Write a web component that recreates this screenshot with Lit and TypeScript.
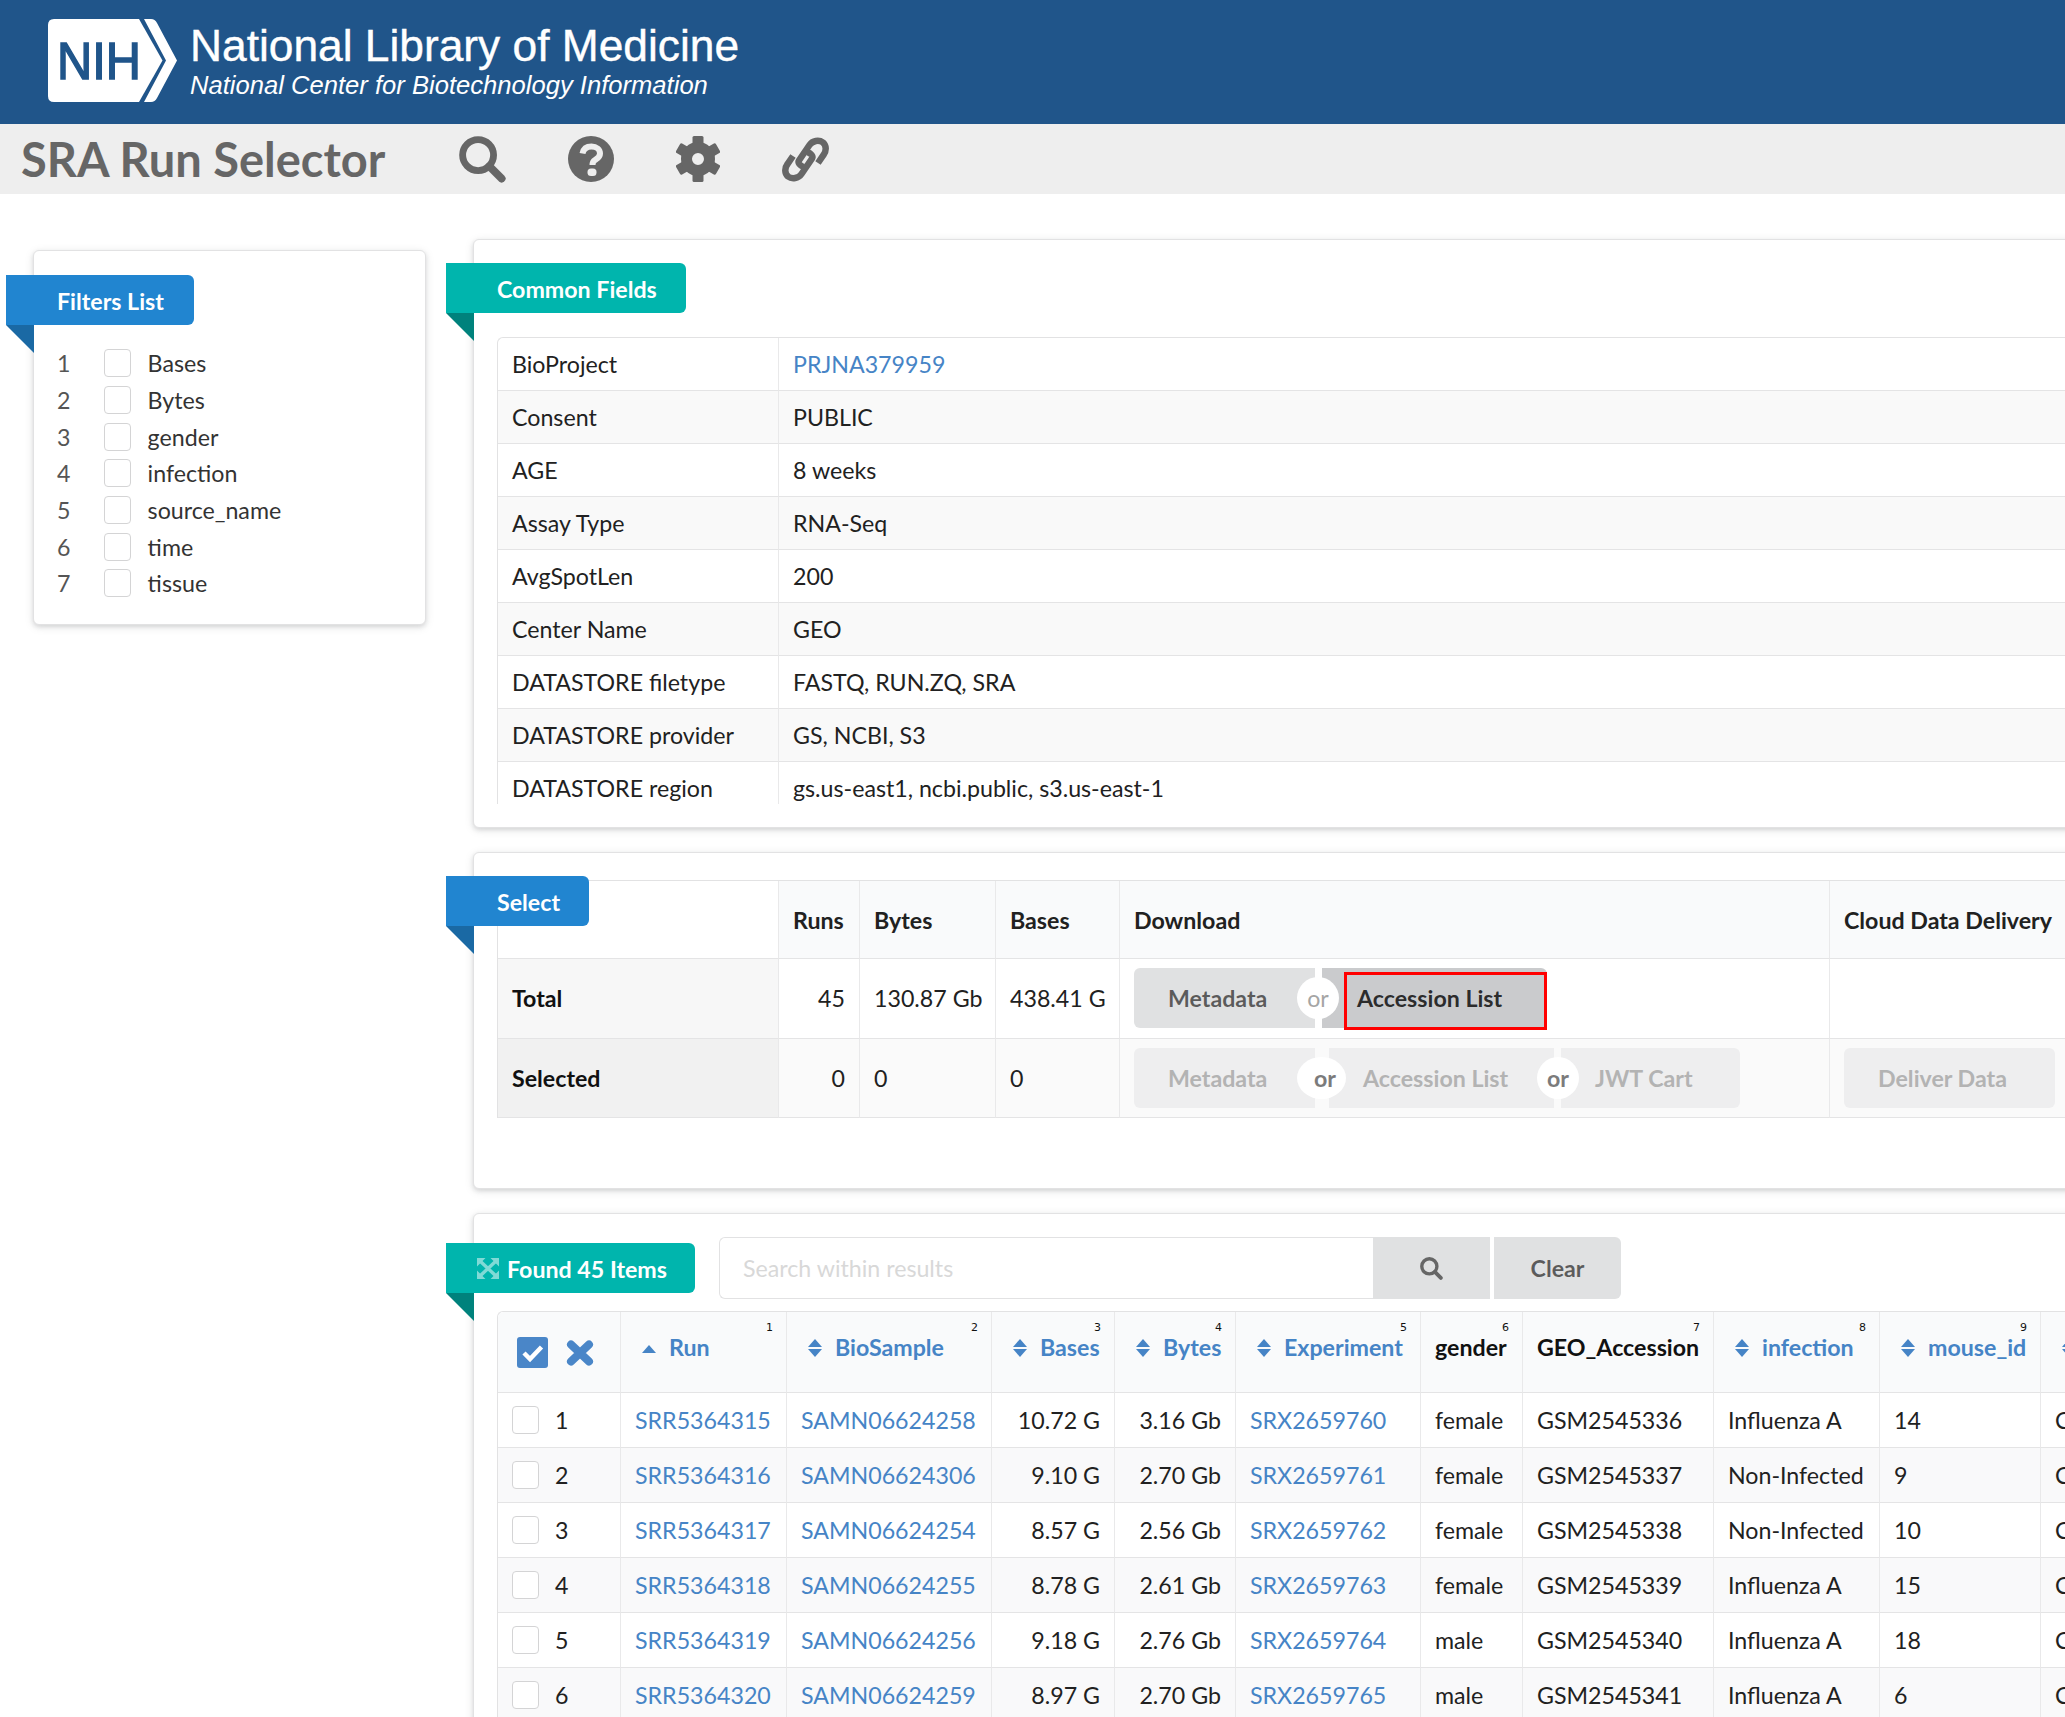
import { LitElement, html, css, svg, nothing } from 'lit';
import { customElement } from 'lit/decorators.js';

const FILTERS = ['Bases', 'Bytes', 'gender', 'infection', 'source_name', 'time', 'tissue'];

const COMMON = [
  ['BioProject', 'PRJNA379959'],
  ['Consent', 'PUBLIC'],
  ['AGE', '8 weeks'],
  ['Assay Type', 'RNA-Seq'],
  ['AvgSpotLen', '200'],
  ['Center Name', 'GEO'],
  ['DATASTORE filetype', 'FASTQ, RUN.ZQ, SRA'],
  ['DATASTORE provider', 'GS, NCBI, S3'],
  ['DATASTORE region', 'gs.us-east1, ncbi.public, s3.us-east-1'],
];

const SELECT_COLS = [281, 81, 136, 124, 710, 320];
const RUN_COLS = [123, 166, 205, 123, 121, 185, 102, 191, 166, 161, 109];

const HEADS: Array<[string, 'asc' | 'both' | 'none']> = [
  ['Run', 'asc'],
  ['BioSample', 'both'],
  ['Bases', 'both'],
  ['Bytes', 'both'],
  ['Experiment', 'both'],
  ['gender', 'none'],
  ['GEO_Accession', 'none'],
  ['infection', 'both'],
  ['mouse_id', 'both'],
  ['', 'both'],
];

const RUNS = [
  ['SRR5364315', 'SAMN06624258', '10.72 G', '3.16 Gb', 'SRX2659760', 'female', 'GSM2545336', 'Influenza A', '14'],
  ['SRR5364316', 'SAMN06624306', '9.10 G', '2.70 Gb', 'SRX2659761', 'female', 'GSM2545337', 'Non-Infected', '9'],
  ['SRR5364317', 'SAMN06624254', '8.57 G', '2.56 Gb', 'SRX2659762', 'female', 'GSM2545338', 'Non-Infected', '10'],
  ['SRR5364318', 'SAMN06624255', '8.78 G', '2.61 Gb', 'SRX2659763', 'female', 'GSM2545339', 'Influenza A', '15'],
  ['SRR5364319', 'SAMN06624256', '9.18 G', '2.76 Gb', 'SRX2659764', 'male', 'GSM2545340', 'Influenza A', '18'],
  ['SRR5364320', 'SAMN06624259', '8.97 G', '2.70 Gb', 'SRX2659765', 'male', 'GSM2545341', 'Influenza A', '6'],
];

const searchIcon = (size: number) => html`<svg width=${size} height=${size} viewBox="0 0 48 48" fill="none" stroke="#666">
  <circle cx="19.5" cy="19.5" r="15.8" stroke-width="7"></circle>
  <path d="M31 31 L43.5 43.5" stroke-width="8" stroke-linecap="round"></path>
</svg>`;

const helpIcon = html`<svg width="46" height="46" viewBox="0 0 46 46">
  <circle cx="23" cy="23" r="23" fill="#666"></circle>
  <path d="M14.5 17.5 C15.5 12.5 19 10.5 23.5 10.5 C28.5 10.5 32 13.5 32 17.5 C32 21.5 29 22.8 27 24 C25 25.2 24.5 26.5 24.5 29" fill="none" stroke="#eee" stroke-width="6"></path>
  <rect x="19.5" y="32.5" width="9" height="7.5" rx="3.5" fill="#eee"></rect>
</svg>`;

const gearIcon = html`<svg width="44" height="46" viewBox="-22 -23 44 46">
  ${[0, 60, 120, 180, 240, 300].map(
    (a) => svg`<rect x="-5.5" y="-23" width="11" height="12" rx="1.5" fill="#666" transform="rotate(${a})"></rect>`
  )}
  <circle r="11.5" fill="none" stroke="#666" stroke-width="11"></circle>
</svg>`;

const linkIcon = html`<svg width="47" height="47" viewBox="0 0 47 47" fill="none" stroke="#666" stroke-width="6.5">
  <path d="M21.5 31 C18 29.5 15.5 27 17 24.5 L27.5 9 C30.5 4.5 37 3.5 41 6.5 C44.5 9.5 44.5 15 41.5 19 L36 27"></path>
  <path d="M25.5 16 C29 17.5 31.5 20 30 22.5 L19.5 38 C16.5 42.5 10 43.5 6 40.5 C2.5 37.5 2.5 32 5.5 28 L11 20"></path>
</svg>`;

const expandIcon = html`<svg class="expand" width="22" height="21" viewBox="0 0 22 21" opacity="0.5">
  <path d="M0 0 H8.5 L0 8.5 Z M22 0 V8.5 L13.5 0 Z M0 21 V12.5 L8.5 21 Z M22 21 H13.5 L22 12.5 Z" fill="#fff"></path>
  <path d="M3 3 L19 18 M19 3 L3 18" stroke="#fff" stroke-width="3.4" fill="none"></path>
</svg>`;

const sortIcon = (kind: string) => {
  if (kind === 'none') return nothing;
  return html`<svg class="sort" width="14" height="18" viewBox="0 0 14 18" fill="#4684c6">
    <path d="M7 ${kind === 'asc' ? 6 : 0} L14 ${kind === 'asc' ? 14 : 8} H0 Z"></path>
    ${kind === 'both' ? svg`<path d="M0 10 H14 L7 18 Z"></path>` : nothing}
  </svg>`;
};

@customElement('app-root')
export class AppRoot extends LitElement {
  static override styles = css`
    :host {
      display: block;
      height: 1717px;
      overflow: hidden;
      background: #fff;
      color: #212121;
      font-family: Lato, 'Open Sans', sans-serif;
      font-size: 23.2px;
      line-height: 30px;
    }

    header {
      height: 124px;
      box-sizing: border-box;
      padding: 19px 0 0 48px;
      background: #20558a;
      display: flex;
      gap: 13px;
      color: #fff;
      font-family: 'Liberation Sans', Arial, sans-serif;
    }

    .logo {
      display: block;
      flex: none;
    }

    .logo text {
      font-family: 'Liberation Sans', Arial, sans-serif;
      font-size: 52px;
    }

    .org {
      padding-top: 3px;
    }

    .org b {
      display: block;
      font-weight: 400;
      font-size: 44.3px;
      line-height: 48px;
      -webkit-text-stroke: 0.4px #fff;
    }

    .org i {
      display: block;
      font-size: 25.6px;
      line-height: 30px;
    }

    .toolbar {
      height: 70px;
      background: #eee;
      display: flex;
      align-items: center;
      gap: 62px;
      padding-left: 21px;
      color: #666;
    }

    .toolbar h1 {
      margin: 0 12px 0 0;
      font-size: 47px;
      font-weight: 700;
      line-height: 70px;
    }

    .toolbar svg {
      display: block;
      flex: none;
    }

    main {
      display: flex;
      align-items: flex-start;
      gap: 47px;
      padding-left: 33px;
    }

    .card {
      box-sizing: border-box;
      background: #fff;
      border: 1px solid #e2e2e3;
      border-radius: 6px;
      padding: 23px;
      box-shadow: 0 2px 4px 0 rgba(34, 36, 38, 0.12), 0 2px 10px 0 rgba(34, 36, 38, 0.1);
    }

    .filters {
      flex: none;
      width: 393px;
      margin-top: 56px;
      padding-bottom: 22px;
    }

    .right {
      flex: none;
      width: 1700px;
      margin-top: 45px;
      display: flex;
      flex-direction: column;
      gap: 24px;
    }

    .ribbon {
      position: relative;
      z-index: 1;
      box-sizing: border-box;
      height: 50px;
      margin-left: -51px;
      padding: 1px 0 0 51px;
      display: flex;
      align-items: center;
      width: max-content;
      border-radius: 0 6px 6px 0;
      color: #fff;
      font-weight: 700;
    }

    .ribbon::after {
      content: '';
      position: absolute;
      top: 100%;
      left: 0;
      width: 28px;
      height: 28px;
      clip-path: polygon(0 0, 100% 0, 100% 100%);
    }

    .ribbon.blue {
      background: #2185d0;
    }

    .ribbon.blue::after {
      background: #1a69a4;
    }

    .ribbon.teal {
      background: #00b5ad;
    }

    .ribbon.teal::after {
      background: #00827c;
    }

    .filters .ribbon {
      width: 188px;
      margin-top: 1px;
    }

    .filter-list {
      margin-top: 20px;
    }

    .filter-row {
      height: 36.7px;
      display: flex;
      align-items: center;
      color: #333;
    }

    .filter-row span:first-child {
      width: 46.6px;
      color: #555;
    }

    .check {
      flex: none;
      display: block;
      box-sizing: border-box;
      width: 27px;
      height: 28px;
      margin-right: 17px;
      background: #fff;
      border: 1px solid #d4d4d5;
      border-radius: 4px;
    }

    table {
      border-collapse: separate;
      border-spacing: 0;
      table-layout: fixed;
      width: 100%;
      border-top: 1px solid #e2e2e3;
      border-left: 1px solid #e2e2e3;
      border-radius: 6px 0 0 0;
    }

    td,
    th {
      box-sizing: border-box;
      padding: 0 14px;
      border-right: 1px solid #e9e9ea;
      border-bottom: 1px solid #e4e4e5;
      text-align: left;
      white-space: nowrap;
      overflow: hidden;
    }

    a {
      color: #4684c6;
      text-decoration: none;
    }

    .clip {
      height: 467px;
      overflow: hidden;
    }

    .common-card .ribbon {
      width: 240px;
      margin-bottom: 24px;
    }

    .common td {
      height: 53px;
    }

    .common td:first-child {
      width: 281px;
    }

    .common tr:nth-child(even) td {
      background: #f9f9f9;
    }

    .select-card {
      position: relative;
      padding-top: 27px;
      height: 337px;
    }

    .select-card .ribbon {
      position: absolute;
      top: 23px;
      left: -28px;
      margin: 0;
      width: 143px;
    }

    .select thead th {
      height: 78px;
      background: #f9fafb;
      font-weight: 700;
    }

    .select thead th:first-child {
      background: #fff;
    }

    .select tbody td {
      height: 80px;
      padding-bottom: 2px;
    }

    .select .num {
      text-align: right;
    }

    .select tbody td:first-child {
      font-weight: 700;
      color: #111;
      background: #f7f7f7;
    }

    .select tr.selected td {
      height: 79px;
      padding-bottom: 0;
      background: #fafafa;
    }

    .select tr.selected td:first-child {
      background: #f1f1f1;
    }

    .btns {
      display: flex;
      height: 60px;
    }

    .btn {
      position: relative;
      box-sizing: border-box;
      display: flex;
      align-items: center;
      height: 60px;
      padding-left: 34px;
      background: #e0e1e2;
      color: rgba(0, 0, 0, 0.6);
      font-weight: 700;
    }

    .btn:first-child {
      border-radius: 6px 0 0 6px;
    }

    .btn:last-child {
      border-radius: 0 6px 6px 0;
    }

    .btn.solo {
      border-radius: 6px;
    }

    .btn.dark {
      background: #cacbcd;
      color: rgba(0, 0, 0, 0.8);
      padding-left: 35px;
    }

    .off {
      background: #eeeeef;
      color: #b3b3b3;
    }

    .marked {
      position: absolute;
      top: 4px;
      left: 22px;
      right: 0;
      bottom: -2px;
      border: 3px solid #f00;
    }

    .or-gap {
      position: relative;
      flex: none;
    }

    .or {
      position: absolute;
      z-index: 1;
      top: 9px;
      height: 42px;
      border-radius: 50%;
      background: #fff;
      display: flex;
      align-items: center;
      justify-content: center;
      color: #a5a5a5;
    }

    .or.strong {
      font-weight: 700;
      color: #7b7b7b;
    }

    .or.pushed {
      padding-left: 7px;
      box-sizing: border-box;
    }

    .tools {
      display: flex;
      align-items: flex-start;
      gap: 24px;
      margin-bottom: 12px;
    }

    .tools .ribbon {
      margin-top: 6px;
      padding-left: 31px;
      width: 249px;
      flex: none;
      gap: 8px;
    }

    .search {
      display: flex;
      height: 62px;
    }

    .search input {
      box-sizing: border-box;
      width: 654px;
      height: 62px;
      padding: 0 23px;
      border: 1px solid #e2e2e3;
      border-right: 0;
      border-radius: 6px 0 0 6px;
      outline: 0;
      background: #fff;
      font: inherit;
    }

    .search input::placeholder {
      color: #d8d8d8;
    }

    .search button {
      box-sizing: border-box;
      height: 62px;
      padding: 0;
      border: 0;
      background: #e0e1e2;
      color: rgba(0, 0, 0, 0.6);
      font: inherit;
      font-weight: 700;
      display: flex;
      align-items: center;
      justify-content: center;
    }

    .search .go {
      width: 117px;
      margin-right: 4px;
    }

    .search .clear {
      width: 127px;
      border-radius: 0 6px 6px 0;
    }

    .expand {
      flex: none;
    }

    .runs {
      width: 1652px;
    }

    .runs thead th {
      position: relative;
      height: 81px;
      padding-top: 20px;
      vertical-align: top;
      background: #f9fafb;
      font-weight: 700;
      color: #111;
    }

    .runs thead th:first-child {
      padding: 25px 0 0 19px;
      border-top-left-radius: 6px;
    }

    .runs thead a {
      font-weight: 700;
    }

    .runs sup {
      position: absolute;
      top: 9px;
      right: 13px;
      font-family: 'DejaVu Sans', sans-serif;
      font-size: 11px;
      line-height: 13px;
      font-weight: 400;
      color: #111;
    }

    .sort {
      display: inline-block;
      margin: 0 13px 0 7px;
      vertical-align: -1px;
    }

    .bulk {
      display: flex;
      align-items: flex-start;
      gap: 18px;
    }

    .bulk svg {
      display: block;
      flex: none;
    }

    .runs tbody td {
      height: 55px;
    }

    .runs tbody tr:nth-child(even) td {
      background: #f9f9fa;
    }

    .runs .r {
      text-align: right;
    }

    .row-head {
      display: flex;
      align-items: center;
      gap: 16px;
    }

    .row-head .check {
      margin: 0;
    }
  `;

  private renderHeader() {
    return html`
      <header>
        <svg class="logo" width="129" height="83" viewBox="48 19 129 83">
          <path d="M54 19 H139 L162.5 60.5 L139 102 H54 Q48 102 48 96 V25 Q48 19 54 19 Z" fill="#fff"></path>
          <path d="M144 19 H151 Q155 19 157 23 L177 60.5 L157 98 Q155 102 151 102 H144 L166 60.5 Z" fill="#fff"></path>
          <text x="57" y="79" textLength="84" lengthAdjust="spacingAndGlyphs" fill="#20558a" stroke="#20558a" stroke-width="1.5">NIH</text>
        </svg>
        <div class="org">
          <b>National Library of Medicine</b>
          <i>National Center for Biotechnology Information</i>
        </div>
      </header>
      <div class="toolbar">
        <h1>SRA Run Selector</h1>
        ${searchIcon(47)} ${helpIcon} ${gearIcon} ${linkIcon}
      </div>
    `;
  }

  private renderFilters() {
    return html`
      <section class="card filters">
        <div class="ribbon blue">Filters List</div>
        <div class="filter-list">
          ${FILTERS.map(
            (name, i) => html`<div class="filter-row">
              <span>${i + 1}</span>
              <span class="check"></span>
              <span>${name}</span>
            </div>`
          )}
        </div>
      </section>
    `;
  }

  private renderCommon() {
    return html`
      <section class="card common-card">
        <div class="ribbon teal">Common Fields</div>
        <div class="clip">
          <table class="common">
            ${COMMON.map(
              ([key, value], i) => html`<tr>
                <td>${key}</td>
                <td>${i === 0 ? html`<a>${value}</a>` : value}</td>
              </tr>`
            )}
          </table>
        </div>
      </section>
    `;
  }

  private renderOr(gap: number, left: number, width: number, cls = '') {
    return html`<span class="or-gap" style="width:${gap}px">
      <span class="or ${cls}" style="left:${left}px;width:${width}px">or</span>
    </span>`;
  }

  private renderSelect() {
    return html`
      <section class="card select-card">
        <div class="ribbon blue">Select</div>
        <table class="select">
          <colgroup>
            ${SELECT_COLS.map((w) => html`<col style="width:${w}px" />`)}
          </colgroup>
          <thead>
            <tr>
              <th></th>
              <th>Runs</th>
              <th>Bytes</th>
              <th>Bases</th>
              <th>Download</th>
              <th>Cloud Data Delivery</th>
            </tr>
          </thead>
          <tbody>
            <tr>
              <td>Total</td>
              <td class="num">45</td>
              <td>130.87 Gb</td>
              <td>438.41 G</td>
              <td>
                <div class="btns">
                  <span class="btn" style="width:181px">Metadata</span>
                  ${this.renderOr(7, -18, 42)}
                  <span class="btn dark" style="width:225px">Accession List<span class="marked"></span></span>
                </div>
              </td>
              <td></td>
            </tr>
            <tr class="selected">
              <td>Selected</td>
              <td class="num">0</td>
              <td>0</td>
              <td>0</td>
              <td>
                <div class="btns">
                  <span class="btn off" style="width:181px">Metadata</span>
                  ${this.renderOr(14, -18, 49, 'strong pushed')}
                  <span class="btn off" style="width:225px">Accession List</span>
                  ${this.renderOr(7, -17, 42, 'strong')}
                  <span class="btn off" style="width:179px">JWT Cart</span>
                </div>
              </td>
              <td><span class="btn off solo" style="width:211px">Deliver Data</span></td>
            </tr>
          </tbody>
        </table>
      </section>
    `;
  }

  private renderRuns() {
    return html`
      <section class="card">
        <div class="tools">
          <div class="ribbon teal">${expandIcon}Found 45 Items</div>
          <div class="search">
            <input placeholder="Search within results" />
            <button class="go">${searchIcon(23)}</button>
            <button class="clear">Clear</button>
          </div>
        </div>
        <table class="runs">
          <colgroup>
            ${RUN_COLS.map((w) => html`<col style="width:${w}px" />`)}
          </colgroup>
          <thead>
            <tr>
              <th>
                <div class="bulk">
                  <svg width="31" height="31" viewBox="0 0 31 31">
                    <rect width="31" height="31" rx="3" fill="#4a86c8"></rect>
                    <path d="M7 16 L13 22 L24.5 10" fill="none" stroke="#fff" stroke-width="4.5"></path>
                  </svg>
                  <svg width="28" height="26" viewBox="0 0 28 26" style="margin-top:3px">
                    <path d="M5 4.5 L23 21.5 M23 4.5 L5 21.5" fill="none" stroke="#4a86c8" stroke-width="8" stroke-linecap="round"></path>
                  </svg>
                </div>
              </th>
              ${HEADS.map(
                ([label, kind], i) => html`<th>
                  ${sortIcon(kind)}${kind === 'none' ? label : html`<a>${label}</a>`}
                  ${i < 9 ? html`<sup>${i + 1}</sup>` : nothing}
                </th>`
              )}
            </tr>
          </thead>
          <tbody>
            ${RUNS.map(
              (row, i) => html`<tr>
                <td>
                  <div class="row-head">
                    <span class="check"></span>
                    <span>${i + 1}</span>
                  </div>
                </td>
                <td><a>${row[0]}</a></td>
                <td><a>${row[1]}</a></td>
                <td class="r">${row[2]}</td>
                <td class="r">${row[3]}</td>
                <td><a>${row[4]}</a></td>
                <td>${row[5]}</td>
                <td>${row[6]}</td>
                <td>${row[7]}</td>
                <td>${row[8]}</td>
                <td>C57BL/6</td>
              </tr>`
            )}
          </tbody>
        </table>
      </section>
    `;
  }

  override render() {
    return html`
      ${this.renderHeader()}
      <main>
        ${this.renderFilters()}
        <div class="right">${this.renderCommon()} ${this.renderSelect()} ${this.renderRuns()}</div>
      </main>
    `;
  }
}
